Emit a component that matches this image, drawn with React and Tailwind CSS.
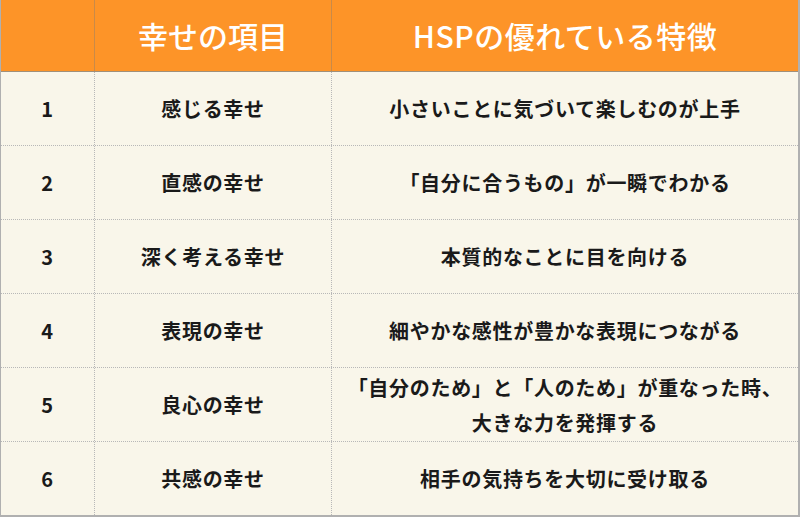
export default function App() {
  const rows = [
    ["1", "感じる幸せ", ["小さいことに気づいて楽しむのが上手"]],
    ["2", "直感の幸せ", ["「自分に合うもの」が一瞬でわかる"]],
    ["3", "深く考える幸せ", ["本質的なことに目を向ける"]],
    ["4", "表現の幸せ", ["細やかな感性が豊かな表現につながる"]],
    ["5", "良心の幸せ", ["「自分のため」と「人のため」が重なった時、", "大きな力を発揮する"]],
    ["6", "共感の幸せ", ["相手の気持ちを大切に受け取る"]],
  ];
  const font = { fontFamily: '"Noto Sans CJK JP", "Noto Sans", sans-serif' };
  return (
    <div
      className="w-[800px] h-[517px] flex flex-col bg-[#f9f6ea] border-l border-r-2 border-b-2 border-[#b0b0b0]"
      style={font}
    >
      <div className="h-[72px] flex bg-[#fd9428] border-b border-[#a0907a] text-white text-[30px] font-medium">
        <div className="w-[94px] border-r border-[#c98a48]" />
        <div className="w-[237px] border-r border-[#c98a48] flex items-center justify-center">幸せの項目</div>
        <div className="flex-1 flex items-center justify-center tracking-[0.5px]">HSPの優れている特徴</div>
      </div>
      {rows.map(([n, a, b], i) => (
        <div
          key={n}
          className={`flex-1 flex text-[#1a1a1a] font-bold text-[20px] tracking-[0.7px] ${i < 5 ? "border-b border-dotted border-[#b8b8b8]" : ""}`}
        >
          <div className="w-[94px] border-r border-dotted border-[#b8b8b8] flex items-center justify-center text-[20px]">{n}</div>
          <div className="w-[237px] border-r border-dotted border-[#b8b8b8] flex items-center justify-center">{a}</div>
          <div className="flex-1 flex flex-col items-center justify-center leading-[35px]">
            {b.map((t) => (
              <div key={t}>{t}</div>
            ))}
          </div>
        </div>
      ))}
    </div>
  );
}
